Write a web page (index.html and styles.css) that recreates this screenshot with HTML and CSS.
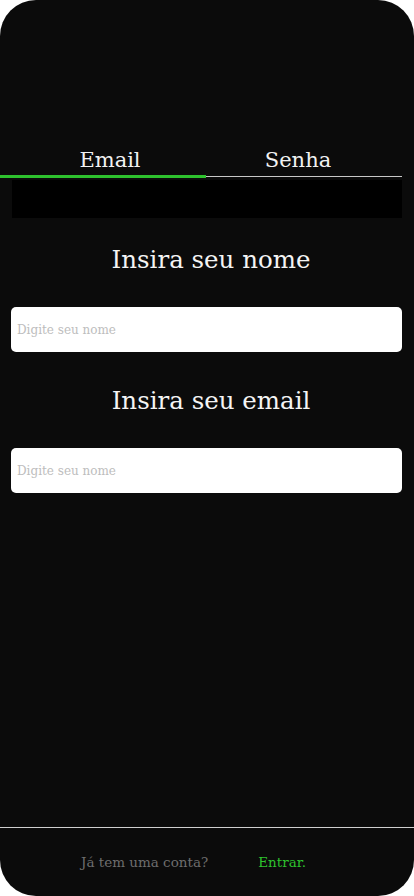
FILE: index.html
```html
<!DOCTYPE html>
<html lang="pt">
<head>
<meta charset="utf-8">
<title>Cadastro</title>
<link rel="stylesheet" href="styles.css">
</head>
<body>
<div class="phone">
  <main class="content">
    <nav class="tabs">
      <div class="tab tab-active">Email</div>
      <div class="tab tab-idle">Senha</div>
      <div class="bar bar-active"></div>
      <div class="bar bar-idle"></div>
    </nav>
    <div class="banner"></div>
    <section class="field">
      <h2 class="label">Insira seu nome</h2>
      <input class="input" type="text" placeholder="Digite seu nome">
    </section>
    <section class="field">
      <h2 class="label">Insira seu email</h2>
      <input class="input" type="text" placeholder="Digite seu nome">
    </section>
  </main>
  <footer class="footer">
    <span class="footer-q">Já tem uma conta?</span>
    <a class="footer-link" href="#">Entrar.</a>
  </footer>
</div>
</body>
</html>
```
FILE: styles.css
```css
html, body {
  margin: 0;
  padding: 0;
  background: #ffffff;
}
body {
  font-family: "DejaVu Serif", "Liberation Serif", serif;
}
.phone {
  width: 414px;
  height: 896px;
  background: #0b0b0b;
  border-radius: 36px;
  display: flex;
  flex-direction: column;
  overflow: hidden;
}
.content {
  flex: 1;
  display: flex;
  flex-direction: column;
}
.tabs {
  margin-top: 145px;
  width: 402px;
  display: grid;
  grid-template-columns: 206px 196px;
  grid-template-rows: 30px 3px;
  align-items: end;
}
.tab {
  color: #f2f2f2;
  font-size: 21px;
  line-height: 30px;
  text-align: center;
}
.tab-active {
  padding-left: 14px;
}
.tab-idle {
  padding-right: 12px;
}
.bar-active {
  height: 3px;
  background: #2ec22e;
}
.bar-idle {
  height: 1px;
  margin-bottom: 1px;
  background: #c8c8c8;
}
.banner {
  margin: 2px 0 0 12px;
  width: 390px;
  height: 38px;
  background: #000000;
}
.field {
  display: flex;
  flex-direction: column;
}
.label {
  margin: 24px 0 0 0;
  padding-left: 8px;
  font-weight: normal;
  font-size: 24.5px;
  line-height: 36px;
  color: #f4f4f4;
  text-align: center;
}
.field + .field .label {
  margin-top: 31px;
}
.input {
  margin: 29px 0 0 11px;
  width: 391px;
  height: 45px;
  box-sizing: border-box;
  border: none;
  border-radius: 5px;
  background: #ffffff;
  padding: 0 6px;
  font-family: "DejaVu Serif", "Liberation Serif", serif;
  font-size: 12px;
  color: #333;
  outline: none;
}
.input::placeholder {
  color: #bdbdbd;
}
.footer {
  height: 68px;
  border-top: 1px solid #cfcfcf;
  display: flex;
  align-items: center;
  gap: 50px;
  padding-left: 81px;
  font-size: 13.5px;
}
.footer-q {
  color: #6e6e6e;
}
.footer-link {
  color: #2ec22e;
  text-decoration: none;
}
```
